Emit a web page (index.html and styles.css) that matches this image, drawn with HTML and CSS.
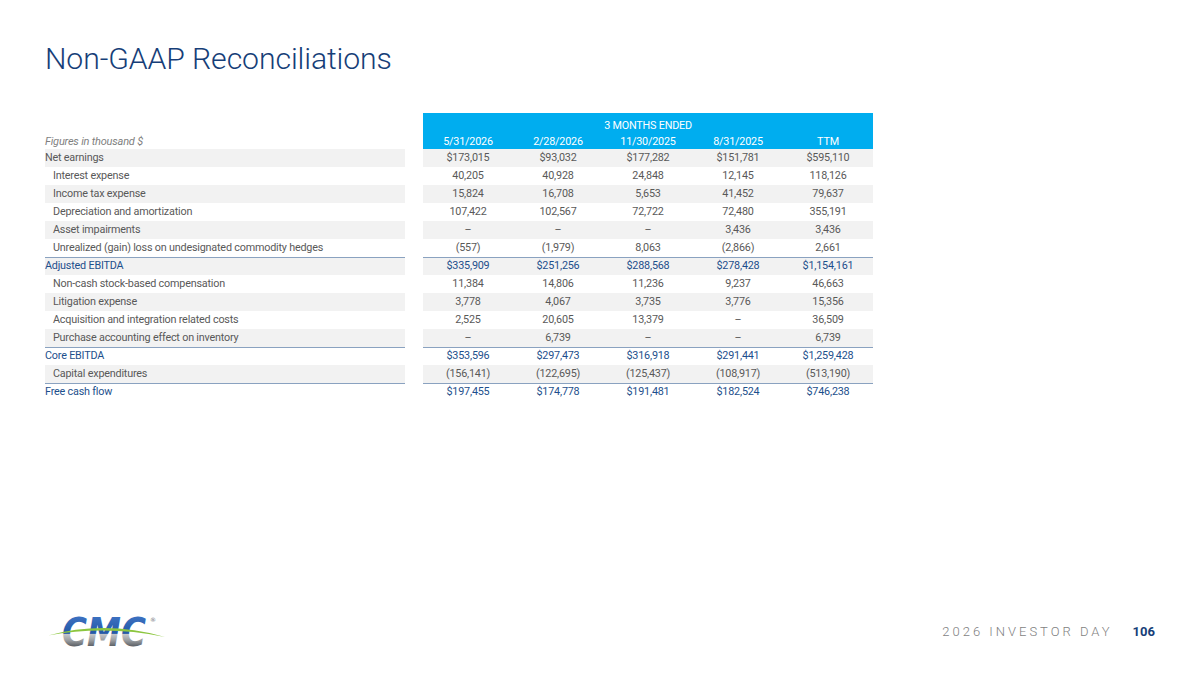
FILE: index.html
```html
<!DOCTYPE html>
<html lang="en">
<head>
<meta charset="utf-8">
<title>Non-GAAP Reconciliations</title>
<link rel="stylesheet" href="styles.css">
</head>
<body>
<div class="slide">
  <h1 class="title">Non-GAAP Reconciliations</h1>

  <div class="table">
    <div class="head">
      <div class="head-label">Figures in thousand $</div>
      <div class="head-box">
        <div class="head-group">3 MONTHS ENDED</div>
        <div class="cols">
          <span>5/31/2026</span><span>2/28/2026</span><span>11/30/2025</span><span>8/31/2025</span><span>TTM</span>
        </div>
      </div>
    </div>

    <div class="row shade"><div class="label">Net earnings</div><div class="cols"><span>$173,015</span><span>$93,032</span><span>$177,282</span><span>$151,781</span><span>$595,110</span></div></div>
    <div class="row"><div class="label ind">Interest expense</div><div class="cols"><span>40,205</span><span>40,928</span><span>24,848</span><span>12,145</span><span>118,126</span></div></div>
    <div class="row shade"><div class="label ind">Income tax expense</div><div class="cols"><span>15,824</span><span>16,708</span><span>5,653</span><span>41,452</span><span>79,637</span></div></div>
    <div class="row"><div class="label ind">Depreciation and amortization</div><div class="cols"><span>107,422</span><span>102,567</span><span>72,722</span><span>72,480</span><span>355,191</span></div></div>
    <div class="row shade"><div class="label ind">Asset impairments</div><div class="cols"><span>–</span><span>–</span><span>–</span><span>3,436</span><span>3,436</span></div></div>
    <div class="row"><div class="label ind">Unrealized (gain) loss on undesignated commodity hedges</div><div class="cols"><span>(557)</span><span>(1,979)</span><span>8,063</span><span>(2,866)</span><span>2,661</span></div></div>
    <div class="row shade total"><div class="label">Adjusted EBITDA</div><div class="cols"><span>$335,909</span><span>$251,256</span><span>$288,568</span><span>$278,428</span><span>$1,154,161</span></div></div>
    <div class="row"><div class="label ind">Non-cash stock-based compensation</div><div class="cols"><span>11,384</span><span>14,806</span><span>11,236</span><span>9,237</span><span>46,663</span></div></div>
    <div class="row shade"><div class="label ind">Litigation expense</div><div class="cols"><span>3,778</span><span>4,067</span><span>3,735</span><span>3,776</span><span>15,356</span></div></div>
    <div class="row"><div class="label ind">Acquisition and integration related costs</div><div class="cols"><span>2,525</span><span>20,605</span><span>13,379</span><span>–</span><span>36,509</span></div></div>
    <div class="row shade"><div class="label ind">Purchase accounting effect on inventory</div><div class="cols"><span>–</span><span>6,739</span><span>–</span><span>–</span><span>6,739</span></div></div>
    <div class="row total"><div class="label">Core EBITDA</div><div class="cols"><span>$353,596</span><span>$297,473</span><span>$316,918</span><span>$291,441</span><span>$1,259,428</span></div></div>
    <div class="row shade"><div class="label ind">Capital expenditures</div><div class="cols"><span>(156,141)</span><span>(122,695)</span><span>(125,437)</span><span>(108,917)</span><span>(513,190)</span></div></div>
    <div class="row total"><div class="label">Free cash flow</div><div class="cols"><span>$197,455</span><span>$174,778</span><span>$191,481</span><span>$182,524</span><span>$746,238</span></div></div>
  </div>

  <div class="footer">
    <svg class="logo" width="124" height="42" viewBox="0 0 124 42" aria-label="CMC">
      <defs>
        <linearGradient id="cmcg" x1="0" y1="8" x2="0" y2="36" gradientUnits="userSpaceOnUse">
          <stop offset="0" stop-color="#3a6fbf"/>
          <stop offset="0.55" stop-color="#2458a6"/>
          <stop offset="0.58" stop-color="#c4c7ca"/>
          <stop offset="0.8" stop-color="#9a9da1"/>
          <stop offset="1" stop-color="#5f6368"/>
        </linearGradient>
      </defs>
      <text x="16" y="36" class="logo-text" fill="url(#cmcg)" textLength="84" lengthAdjust="spacingAndGlyphs">CMC</text>
      <path d="M2 25.5 Q60 10 119 27 Q60 15 2 25.5 Z" fill="#8cc63f"/>
      <text x="104" y="12" class="logo-reg">®</text>
    </svg>
    <div class="tag">2026 INVESTOR DAY<b class="page">106</b></div>
  </div>
</div>
</body>
</html>
```

FILE: styles.css
```css
* { box-sizing: border-box; }
html, body { margin: 0; padding: 0; background: #fff; }
body { font-family: Roboto, "Liberation Sans", Arial, sans-serif; }

.slide {
  width: 1200px;
  height: 675px;
  padding: 0 45px;
  display: flex;
  flex-direction: column;
  overflow: hidden;
}

.title {
  margin: 39px 0 0;
  font-weight: 300;
  font-size: 30.2px;
  line-height: 40px;
  color: #163e78;
  letter-spacing: -0.1px;
}

.table {
  margin-top: 34px;
  width: 828px;
  font-size: 10.8px;
  letter-spacing: -0.2px;
  color: #595959;
}

.head { display: flex; align-items: flex-end; }
.head-label {
  width: 360px;
  font-style: italic;
  font-size: 11px;
  letter-spacing: -0.2px;
  color: #7f7f7f;
  line-height: 14px;
}
.head-box {
  margin-left: 18px;
  width: 450px;
  height: 36px;
  padding-top: 6px;
  background: #00adef;
  color: #fff;
  display: flex;
  flex-direction: column;
  justify-content: space-between;
}
.head-group { text-align: center; line-height: 14px; }
.head-box .cols { line-height: 14px; }

.cols {
  display: grid;
  grid-template-columns: repeat(5, 90px);
  text-align: center;
}

.row { display: flex; height: 18px; line-height: 18px; }
.row .label { width: 360px; white-space: nowrap; }
.row .label.ind { padding-left: 8px; }
.row .cols { margin-left: 18px; width: 450px; }
.row.shade .label, .row.shade .cols { background: #f2f2f2; }

.row.total { color: #1d4f8c; }
.row.total .label, .row.total .cols { border-top: 1.5px solid #8aa2c0; line-height: 16px; }

.footer {
  margin-top: auto;
  margin-bottom: 23px;
  display: flex;
  align-items: center;
  justify-content: space-between;
}
.logo { display: block; margin-left: 1px; overflow: visible; }
.logo-text {
  font-family: "DejaVu Sans", sans-serif;
  font-weight: 700;
  font-style: italic;
  font-size: 39px;
}
.logo-reg { font-family: "DejaVu Sans", sans-serif; font-size: 6px; fill: #6e7277; }

.tag {
  font-size: 13px;
  font-weight: 300;
  letter-spacing: 3.0px;
  color: #7f7f7f;
  display: flex;
  align-items: center;
}
.page {
  font-weight: 700;
  color: #163e78;
  letter-spacing: 0;
  margin-left: 20px;
  font-size: 13px;
}
```
